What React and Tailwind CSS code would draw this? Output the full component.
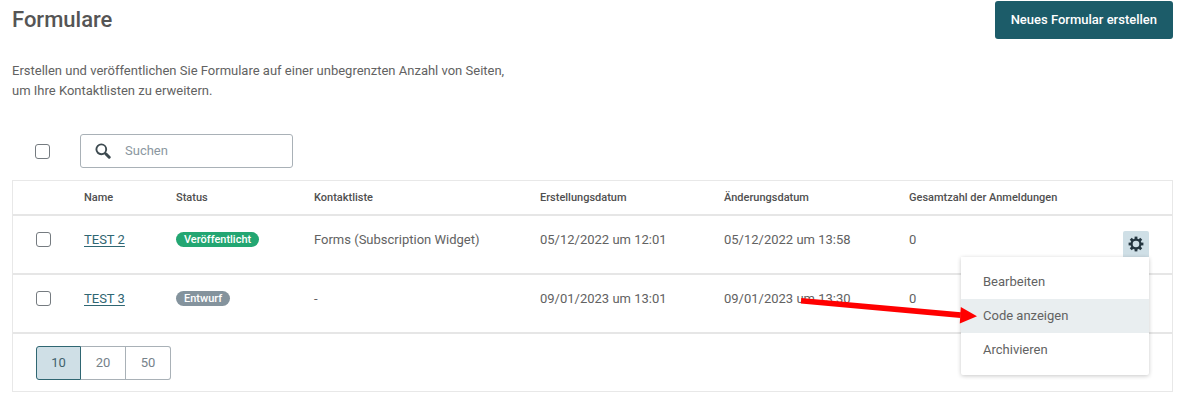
import React, { useState } from 'react'

const FORMS = [
  {
    id: 2,
    name: 'TEST 2',
    status: 'published',
    list: 'Forms (Subscription Widget)',
    created: '05/12/2022 um 12:01',
    updated: '05/12/2022 um 13:58',
    signups: 0,
  },
  {
    id: 3,
    name: 'TEST 3',
    status: 'draft',
    list: '-',
    created: '09/01/2023 um 13:01',
    updated: '09/01/2023 um 13:30',
    signups: 0,
  },
]

const STATUS = {
  published: { label: 'Veröffentlicht', className: 'bg-[#23a672]' },
  draft: { label: 'Entwurf', className: 'bg-[#84939d]' },
}

const ACTIONS = ['Bearbeiten', 'Code anzeigen', 'Archivieren']
const PAGE_SIZES = [10, 20, 50]

function SearchIcon() {
  return (
    <svg viewBox="0 0 16 16" className="w-4 h-4 shrink-0" fill="none" stroke="#3d4a50" aria-hidden="true">
      <circle cx="6.3" cy="6.3" r="4.9" strokeWidth="1.9" />
      <path d="M10 10l1 1" strokeWidth="2" />
      <path d="M11 11l3.2 3.2" strokeWidth="3" strokeLinecap="round" />
    </svg>
  )
}

function GearIcon() {
  return (
    <svg viewBox="0 0 16 16" className="w-4 h-4" fill="none" stroke="#253640" aria-hidden="true">
      <circle cx="8" cy="8" r="4.4" strokeWidth="2.2" />
      {[0, 45, 90, 135, 180, 225, 270, 315].map(a => (
        <path key={a} d="M8 3.4V0.6" strokeWidth="2.8" transform={`rotate(${a} 8 8)`} />
      ))}
    </svg>
  )
}

// Points at the highlighted menu entry
function Arrow() {
  return (
    <svg
      viewBox="0 0 178 30"
      className="absolute right-[172px] top-0 w-[178px] h-[30px] overflow-visible pointer-events-none"
      fill="#ff0000"
      aria-hidden="true"
    >
      <path d="M2.3 -1L162 13.2L161.5 19L1.8 4.6z" />
      <path d="M161.8 8L178 17.2L160.8 24.4z" />
    </svg>
  )
}

function Checkbox({ label }) {
  return (
    <input
      type="checkbox"
      aria-label={label}
      className="block appearance-none w-[15px] h-[15px] rounded-[3px] border border-[#757b80] bg-white checked:bg-[#1c5c69]"
    />
  )
}

function ActionsMenu() {
  return (
    <div className="relative w-[26px] ml-auto mr-[23px]">
      <button
        type="button"
        aria-label="Aktionen"
        aria-haspopup="menu"
        aria-expanded="true"
        className="flex items-center justify-center w-[26px] h-[26px] rounded-t-[2px] bg-[#cfdfe6]"
      >
        <GearIcon />
      </button>
      <ul className="absolute z-10 right-0 top-full w-[188px] py-2 bg-white rounded-b-[2px] shadow-[0_1px_4px_rgba(0,0,0,0.22)]">
        {ACTIONS.map(action => {
          const active = action === 'Code anzeigen'
          return (
            <li key={action} className="relative">
              <button
                type="button"
                className={`block w-full h-[34px] px-[22px] text-left ${active ? 'bg-[#e9eef0]' : ''}`}
              >
                {action}
              </button>
              {active && <Arrow />}
            </li>
          )
        })}
      </ul>
    </div>
  )
}

export default function App() {
  const [pageSize, setPageSize] = useState(10)

  return (
    <main className="pl-3 pr-2 pt-px pb-2 bg-white font-['Roboto',sans-serif] text-[13px] leading-5 text-[#626262]">
      <header className="flex items-center justify-between">
        <h1 className="text-[22px] leading-7 font-medium text-[#555]">Formulare</h1>
        <button type="button" className="h-[38px] px-4 rounded-[3px] bg-[#1c5c69] text-white text-[13px] font-medium">
          Neues Formular erstellen
        </button>
      </header>

      <p className="mt-[22px] max-w-[520px]">
        Erstellen und veröffentlichen Sie Formulare auf einer unbegrenzten Anzahl von Seiten,
        <br />
        um Ihre Kontaktlisten zu erweitern.
      </p>

      <div className="flex items-center mt-[33px] pl-[23px]">
        <Checkbox label="Alle auswählen" />
        <label className="flex items-center gap-[14px] ml-[30px] w-[213px] h-[34px] px-[14px] rounded-[3px] border border-[#a9b1b7]">
          <SearchIcon />
          <input
            type="search"
            aria-label="Suchen"
            placeholder="Suchen"
            className="min-w-0 flex-1 bg-transparent outline-none placeholder:text-[#8b979f]"
          />
        </label>
      </div>

      <section className="mt-3 border border-[#e8e8e8]">
        <table className="w-full table-fixed text-left">
          <colgroup>
            <col className="w-[71px]" />
            <col className="w-[92px]" />
            <col className="w-[138px]" />
            <col className="w-[226px]" />
            <col className="w-[184px]" />
            <col className="w-[185px]" />
            <col />
          </colgroup>
          <thead>
            <tr className="h-[34px] border-b-2 border-[#e6e6e6] text-[11px] text-[#505050]">
              <th />
              <th className="font-medium">Name</th>
              <th className="font-medium">Status</th>
              <th className="font-medium">Kontaktliste</th>
              <th className="font-medium">Erstellungsdatum</th>
              <th className="font-medium">Änderungsdatum</th>
              <th className="font-medium">Gesamtzahl der Anmeldungen</th>
            </tr>
          </thead>
          <tbody>
            {FORMS.map((form, i) => (
              <tr key={form.id} className="h-[59px] border-b-2 border-[#e6e6e6] align-top">
                <td className="pt-4 pl-[23px]">
                  <Checkbox label={`${form.name} auswählen`} />
                </td>
                <td className="pt-[14px]">
                  <a href={`#form-${form.id}`} className="underline underline-offset-2 text-[#2f6672]">
                    {form.name}
                  </a>
                </td>
                <td className="pt-4">
                  <span className={`block w-fit px-2 rounded-full text-[11px] leading-[15px] font-medium text-white ${STATUS[form.status].className}`}>
                    {STATUS[form.status].label}
                  </span>
                </td>
                <td className="pt-[14px]">{form.list}</td>
                <td className="pt-[14px]">{form.created}</td>
                <td className="pt-[14px]">{form.updated}</td>
                <td>
                  <div className="flex">
                    <span className="pt-[14px]">{form.signups}</span>
                    {i === 0 && (
                      <div className="ml-auto pt-[15px]">
                        <ActionsMenu />
                      </div>
                    )}
                  </div>
                </td>
              </tr>
            ))}
          </tbody>
        </table>

        <div className="flex pt-3 pb-[11px] pl-[23px]">
          {PAGE_SIZES.map(size => (
            <button
              key={size}
              type="button"
              onClick={() => setPageSize(size)}
              className={`w-[45px] h-[34px] border-y border-r first:border-l first:rounded-l-[3px] last:rounded-r-[3px] ${
                size === pageSize
                  ? 'border-[#2f6672] bg-[#cfdfe6] text-[#3f626c]'
                  : 'border-[#a9b1b7] text-[#76828a]'
              }`}
            >
              {size}
            </button>
          ))}
        </div>
      </section>
    </main>
  )
}
